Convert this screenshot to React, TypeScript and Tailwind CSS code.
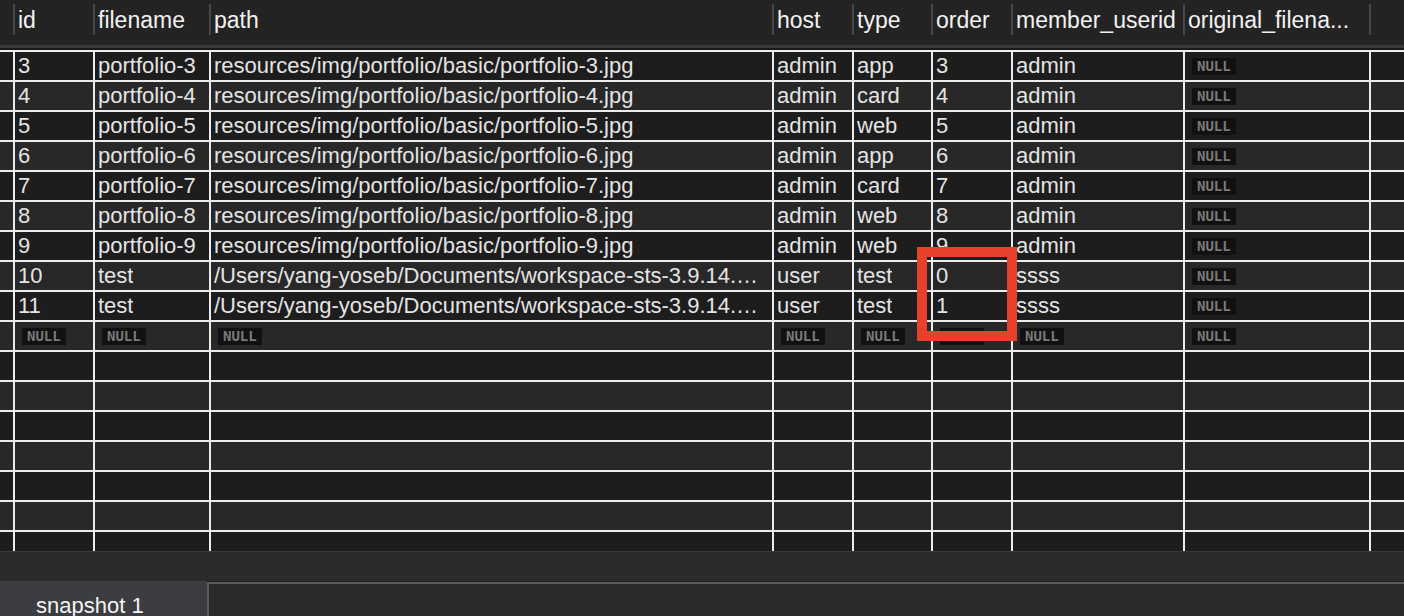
const COLS = 'grid grid-cols-[15px_80px_116px_563px_80px_79px_80px_172px_186px_1fr]'

const HEADERS = ['', 'id', 'filename', 'path', 'host', 'type', 'order', 'member_userid', 'original_filena...', '']

type Cell = string | null

const TYPES = ['app', 'card', 'web', 'app', 'card', 'web', 'web']

const DATA: Cell[][] = [
  ...TYPES.map((t, i) => {
    const n = i + 3
    return ['', String(n), `portfolio-${n}`, `resources/img/portfolio/basic/portfolio-${n}.jpg`, 'admin', t, String(n), 'admin', null, '']
  }),
  ['', '10', 'test', '/Users/yang-yoseb/Documents/workspace-sts-3.9.14.…', 'user', 'test', '0', 'ssss', null, ''],
  ['', '11', 'test', '/Users/yang-yoseb/Documents/workspace-sts-3.9.14.…', 'user', 'test', '1', 'ssss', null, ''],
  ['', null, null, null, null, null, null, null, null, ''],
  ...Array.from({ length: 7 }, () => Array(10).fill('') as Cell[]),
]

function NullBadge() {
  return (
    <span className="ml-[4px] inline-flex h-[17px] items-center bg-[#111111] px-[5px] font-['DejaVu_Sans_Mono',monospace] text-[14px] font-bold leading-none text-[#7a7a7a]">
      NULL
    </span>
  )
}

export default function App() {
  return (
    <div className="relative h-[616px] w-[1404px] overflow-hidden bg-[#1e1e1e] font-['Liberation_Sans',Arial,sans-serif]">
      {/* header */}
      <div className="h-[50px] bg-[#232323]">
        <div className={`${COLS} h-[45px] pt-[4px]`}>
          {HEADERS.map((h, i) => (
            <div
              key={i}
              className={`h-[31px] truncate pl-[3px] text-[23px] leading-[32px] text-[#f2f2f2] ${i < 9 ? 'border-r-2 border-[#474747]' : ''}`}
            >
              {h}
            </div>
          ))}
        </div>
        <div className="h-[3px] bg-[#393939]" />
        <div className="h-[2px] bg-[#1b1b1b]" />
      </div>

      {/* grid */}
      <div className="h-[501px] overflow-hidden">
        {DATA.map((row, r) => (
          <div
            key={r}
            className={`${COLS} h-[30px] border-t-2 border-[#ececec] ${r % 2 === 0 ? 'bg-[#1d1d1d]' : 'bg-[#282828]'}`}
          >
            {row.map((c, i) => (
              <div
                key={i}
                className={`flex h-[28px] items-center overflow-hidden pl-[3px] text-[22px] text-[#e4e4e4] ${i < 9 ? 'border-r-2 border-[#ececec]' : ''}`}
              >
                {c === null ? <NullBadge /> : <span className="truncate leading-[28px]">{c}</span>}
              </div>
            ))}
          </div>
        ))}
      </div>

      {/* bottom bar */}
      <div className="h-[30px] border-t border-[#3a3a3a] bg-[#2b2b2b]" />
      <div className="flex h-[35px]">
        <div className="w-[207px] bg-[#3c3d40] pl-[36px] pt-[10px] text-[22px] leading-[30px] text-[#f4f4f4]">snapshot 1</div>
        <div className="mt-[1px] flex-1 border-l-2 border-t-2 border-[#5b5a56] bg-[#2a2a2a]" />
      </div>

      {/* annotation */}
      <div className="absolute left-[917px] top-[247px] h-[94px] w-[100px] border-[10px] border-[#e8412b]" />
    </div>
  )
}
